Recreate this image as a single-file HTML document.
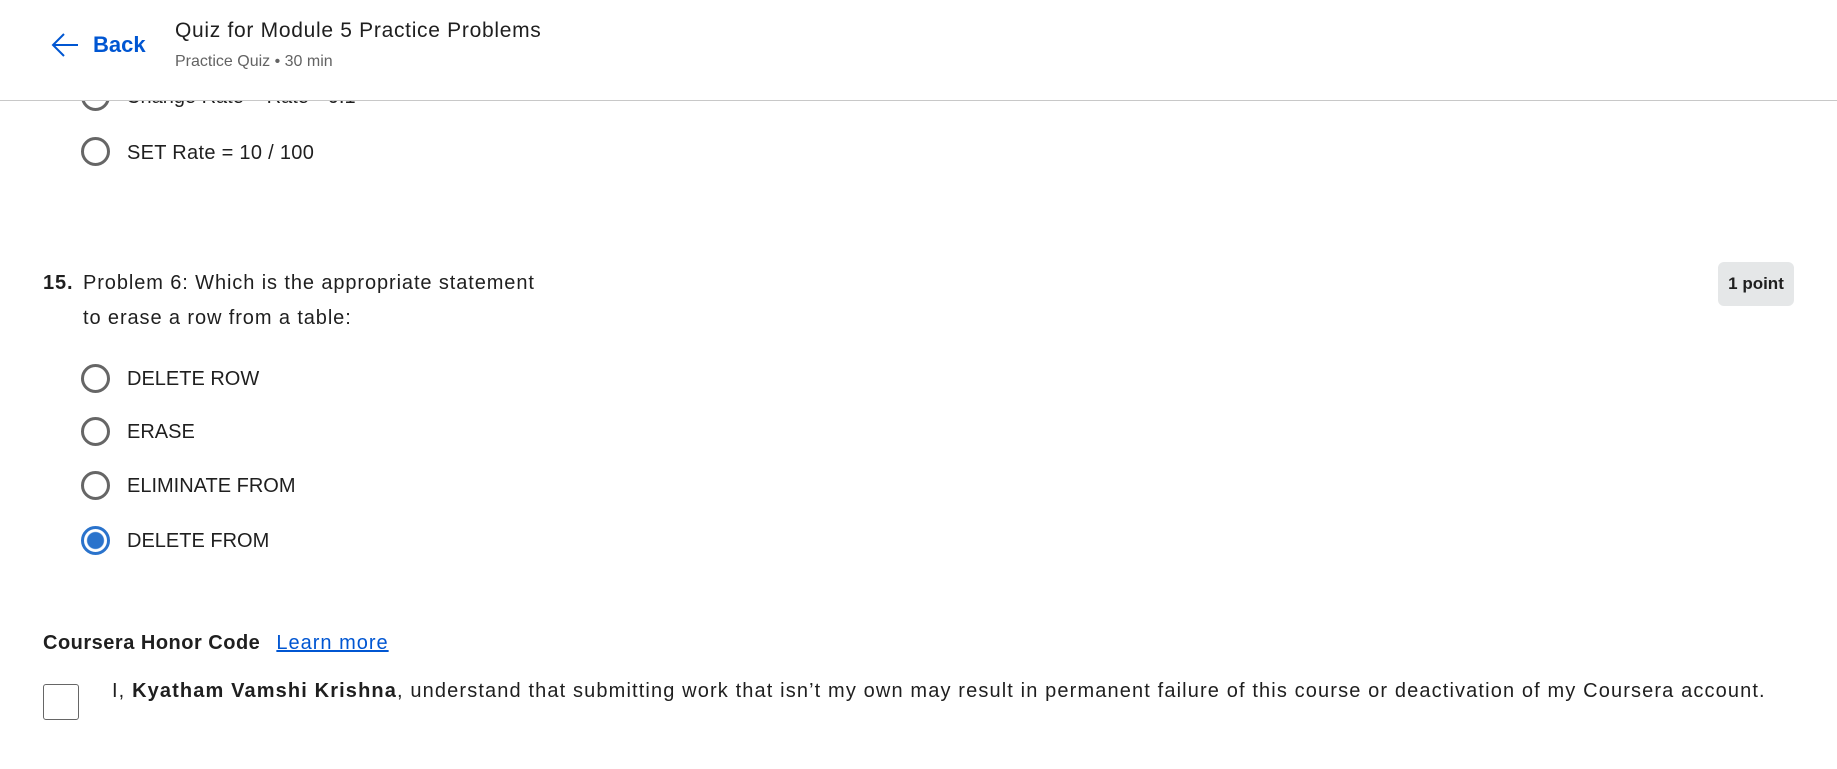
<!DOCTYPE html>
<html><head><meta charset="utf-8"><style>
*{margin:0;padding:0;box-sizing:border-box}
body{width:1837px;height:769px;overflow:hidden;background:#fff;font-family:"Liberation Sans",sans-serif;color:#1f1f1f;position:relative}
.a{position:absolute;white-space:nowrap}
.hdr{position:absolute;left:0;top:0;width:1837px;height:101px;background:#fff;border-bottom:1px solid #c8c8c8;z-index:2}
.radio{position:absolute;width:29px;height:29px;border:3px solid #666;border-radius:50%}
.opt{font-size:20px;color:#1f1f1f}
</style></head><body>
<div class="a opt" style="left:126px;top:86px">Change Rate = Rate * 0.1</div>
<div class="radio" style="left:81px;top:82px"></div>
<div class="hdr">
<svg class="a" style="left:50px;top:31px" width="30" height="28" viewBox="0 0 30 28"><path d="M28 14H3M14 3L3 14l11 11" fill="none" stroke="#0056d2" stroke-width="2"/></svg>
<div class="a" style="left:93px;top:32px;font-size:22px;font-weight:bold;color:#0056d2">Back</div>
<div class="a" style="left:175px;top:19px;font-size:21px;letter-spacing:0.7px;color:#1f1f1f">Quiz for Module 5 Practice Problems</div>
<div class="a" style="left:175px;top:53px;font-size:16px;color:#636363">Practice Quiz • 30 min</div>
</div>
<div class="radio" style="left:81px;top:137px"></div>
<div class="a opt" style="left:127px;top:142px;letter-spacing:0.3px">SET Rate = 10 / 100</div>
<div class="a" style="left:43px;top:272px;font-size:20px;letter-spacing:0.9px"><b>15.</b></div>
<div class="a" style="left:83px;top:272px;font-size:20px;letter-spacing:0.9px">Problem 6: Which is the appropriate statement</div>
<div class="a" style="left:83px;top:307px;font-size:20px;letter-spacing:0.9px">to erase a row from a table:</div>
<div class="a" style="left:1718px;top:262px;width:76px;height:44px;background:#e5e7e8;border-radius:6px;font-size:17px;font-weight:bold;text-align:center;line-height:44px">1 point</div>
<div class="radio" style="left:81px;top:364px"></div><div class="a opt" style="left:127px;top:368px">DELETE ROW</div>
<div class="radio" style="left:81px;top:417px"></div><div class="a opt" style="left:127px;top:421px">ERASE</div>
<div class="radio" style="left:81px;top:471px"></div><div class="a opt" style="left:127px;top:475px">ELIMINATE FROM</div>
<div class="radio" style="left:81px;top:526px;border-color:#2a73cc;background:radial-gradient(circle,#2a73cc 0 8px,#fff 9px)"></div><div class="a opt" style="left:127px;top:530px">DELETE FROM</div>
<div class="a" style="left:43px;top:632px;font-size:20px;font-weight:bold;letter-spacing:0.5px">Coursera Honor Code <span style="font-weight:normal;color:#0056d2;text-decoration:underline;margin-left:10px;letter-spacing:1px">Learn more</span></div>
<div class="a" style="left:43px;top:684px;width:36px;height:36px;border:1.5px solid #666;border-radius:3px"></div>
<div class="a" style="left:112px;top:680px;font-size:20px;letter-spacing:1.13px">I, <b>Kyatham Vamshi Krishna</b>, understand that submitting work that isn’t my own may result in permanent failure of this course or deactivation of my Coursera account.</div>
</body></html>
